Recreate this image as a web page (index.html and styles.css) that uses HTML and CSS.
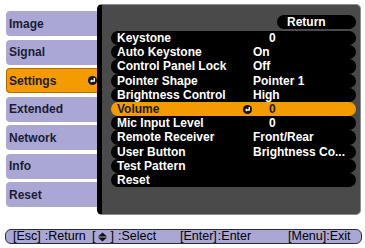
FILE: index.html
```html
<!DOCTYPE html>
<html lang="en">
<head>
  <meta charset="UTF-8">
  <title>Settings Menu</title>
  <link rel="stylesheet" href="styles.css">
</head>
<body>

  <div class="screen">
    <div class="main">
      <div class="tabs">
        <div class="tab">Image</div>
        <div class="tab">Signal</div>
        <div class="tab active">Settings
          <svg class="enter" viewBox="0 0 10 10"><circle cx="5" cy="5" r="5" fill="#111"/><path d="M7 2.2 V5.6 H4" stroke="#fff" stroke-width="1.6" fill="none"/><path d="M2.2 5.6 L4.4 3.6 L4.4 7.6 Z" fill="#fff"/></svg>
        </div>
        <div class="tab">Extended</div>
        <div class="tab">Network</div>
        <div class="tab">Info</div>
        <div class="tab">Reset</div>
      </div>

      <div class="panel">
        <div class="return-row"><span class="return">Return</span></div>
        <div class="row"><span class="label">Keystone</span><span class="value num">0</span></div>
        <div class="row"><span class="label">Auto Keystone</span><span class="value">On</span></div>
        <div class="row"><span class="label">Control Panel Lock</span><span class="value">Off</span></div>
        <div class="row"><span class="label">Pointer Shape</span><span class="value">Pointer 1</span></div>
        <div class="row"><span class="label">Brightness Control</span><span class="value">High</span></div>
        <div class="row selected"><span class="label">Volume</span>
          <span class="value">
            <svg class="enter sel-icon" viewBox="0 0 10 10"><circle cx="5" cy="5" r="5" fill="#111"/><path d="M7 2.2 V5.6 H4" stroke="#fff" stroke-width="1.6" fill="none"/><path d="M2.2 5.6 L4.4 3.6 L4.4 7.6 Z" fill="#fff"/></svg>0
          </span>
        </div>
        <div class="row"><span class="label">Mic Input Level</span><span class="value num">0</span></div>
        <div class="row"><span class="label">Remote Receiver</span><span class="value">Front/Rear</span></div>
        <div class="row"><span class="label">User Button</span><span class="value">Brightness Co...</span></div>
        <div class="row"><span class="label">Test Pattern</span><span class="value"></span></div>
        <div class="row"><span class="label">Reset</span><span class="value"></span></div>
      </div>
    </div>

    <div class="help-bar">
      <span class="hint hint-esc"><span class="key">[Esc]</span>:Return</span>
      <span class="hint hint-sel"><span class="key key-sel">[<svg class="updown" viewBox="0 0 10 10"><path d="M5 0 L10 4.4 L0 4.4 Z M0 5.6 L10 5.6 L5 10 Z" fill="#111"/></svg>]</span>:Select</span>
      <span class="hint hint-enter"><span class="key">[Enter]</span>:Enter</span>
      <span class="hint">[Menu]:Exit</span>
    </div>
  </div>

</body>
</html>
```

FILE: styles.css
```css
* { margin: 0; padding: 0; box-sizing: border-box; }
body {
  background-color: #ffffff;
  font-family: "Liberation Sans", Arial, sans-serif;
  font-size: 12px;
}
.screen {
  width: 365px;
  height: 248px;
  padding-top: 4px;
}
.main {
  display: flex;
}
.tabs {
  width: 100px;
  padding-left: 6px;
  padding-top: 7px;
  display: flex;
  flex-direction: column;
  gap: 3.5px;
}
.tab {
  height: 25px;
  background-color: #aaa7d4;
  border-radius: 4px 0 0 4px;
  color: #1c1c34;
  font-weight: bold;
  padding-left: 3px;
  display: flex;
  align-items: center;
}
.tab.active {
  background-color: #f39b00;
  border: 1px solid #b86a00;
  border-right: none;
  padding-left: 2px;
}
.enter {
  width: 9px;
  height: 9px;
  margin-left: auto;
}
.tab .enter {
  margin-right: 3px;
}
.panel {
  margin-left: -3px;
  width: 264px;
  height: 211px;
  background-color: #4a4a4a;
  border: 1px solid #8c8c8c;
  border-left: 5px solid #000;
  border-radius: 5px;
  padding: 10px 4px 0 9px;
  position: relative;
  z-index: 1;
  color: #ffffff;
  font-weight: bold;
}
.return-row {
  height: 14px;
  margin-bottom: 2px;
  display: flex;
}
.return {
  margin-left: auto;
  width: 79px;
  height: 14px;
  line-height: 14px;
  background-color: #000;
  border-radius: 7px;
  padding-left: 10px;
}
.row {
  height: 14.2px;
  line-height: 14.2px;
  background-color: #000;
  border-radius: 7px;
  display: flex;
  padding-left: 6px;
  white-space: nowrap;
}
.label {
  width: 136px;
}
.value {
  display: flex;
  align-items: center;
}
.value.num {
  padding-left: 16px;
}
.row.selected {
  background-color: #f39b00;
  color: #1a1a1a;
}
.sel-icon {
  margin-left: -10px;
  margin-right: 17px;
}
.help-bar {
  margin: 14px 3px 0 5px;
  height: 15px;
  background-color: #aaa7d4;
  border: 1px solid #2a2a3a;
  border-radius: 6px;
  display: flex;
  align-items: center;
  padding-left: 7px;
  color: #000;
  font-size: 12.5px;
  line-height: 13px;
  white-space: nowrap;
}
.hint {
  display: flex;
  align-items: center;
}
.key {
  display: flex;
  align-items: center;
  margin-right: 4px;
}
.hint-esc {
  width: 79px;
}
.hint-sel {
  width: 88px;
}
.key-sel {
  width: 24px;
  margin-right: 2px;
}
.hint-enter {
  width: 108px;
}
.hint-enter .key {
  margin-right: 1px;
}
.updown {
  width: 9px;
  height: 10px;
  margin: 0 3px;
}
```
